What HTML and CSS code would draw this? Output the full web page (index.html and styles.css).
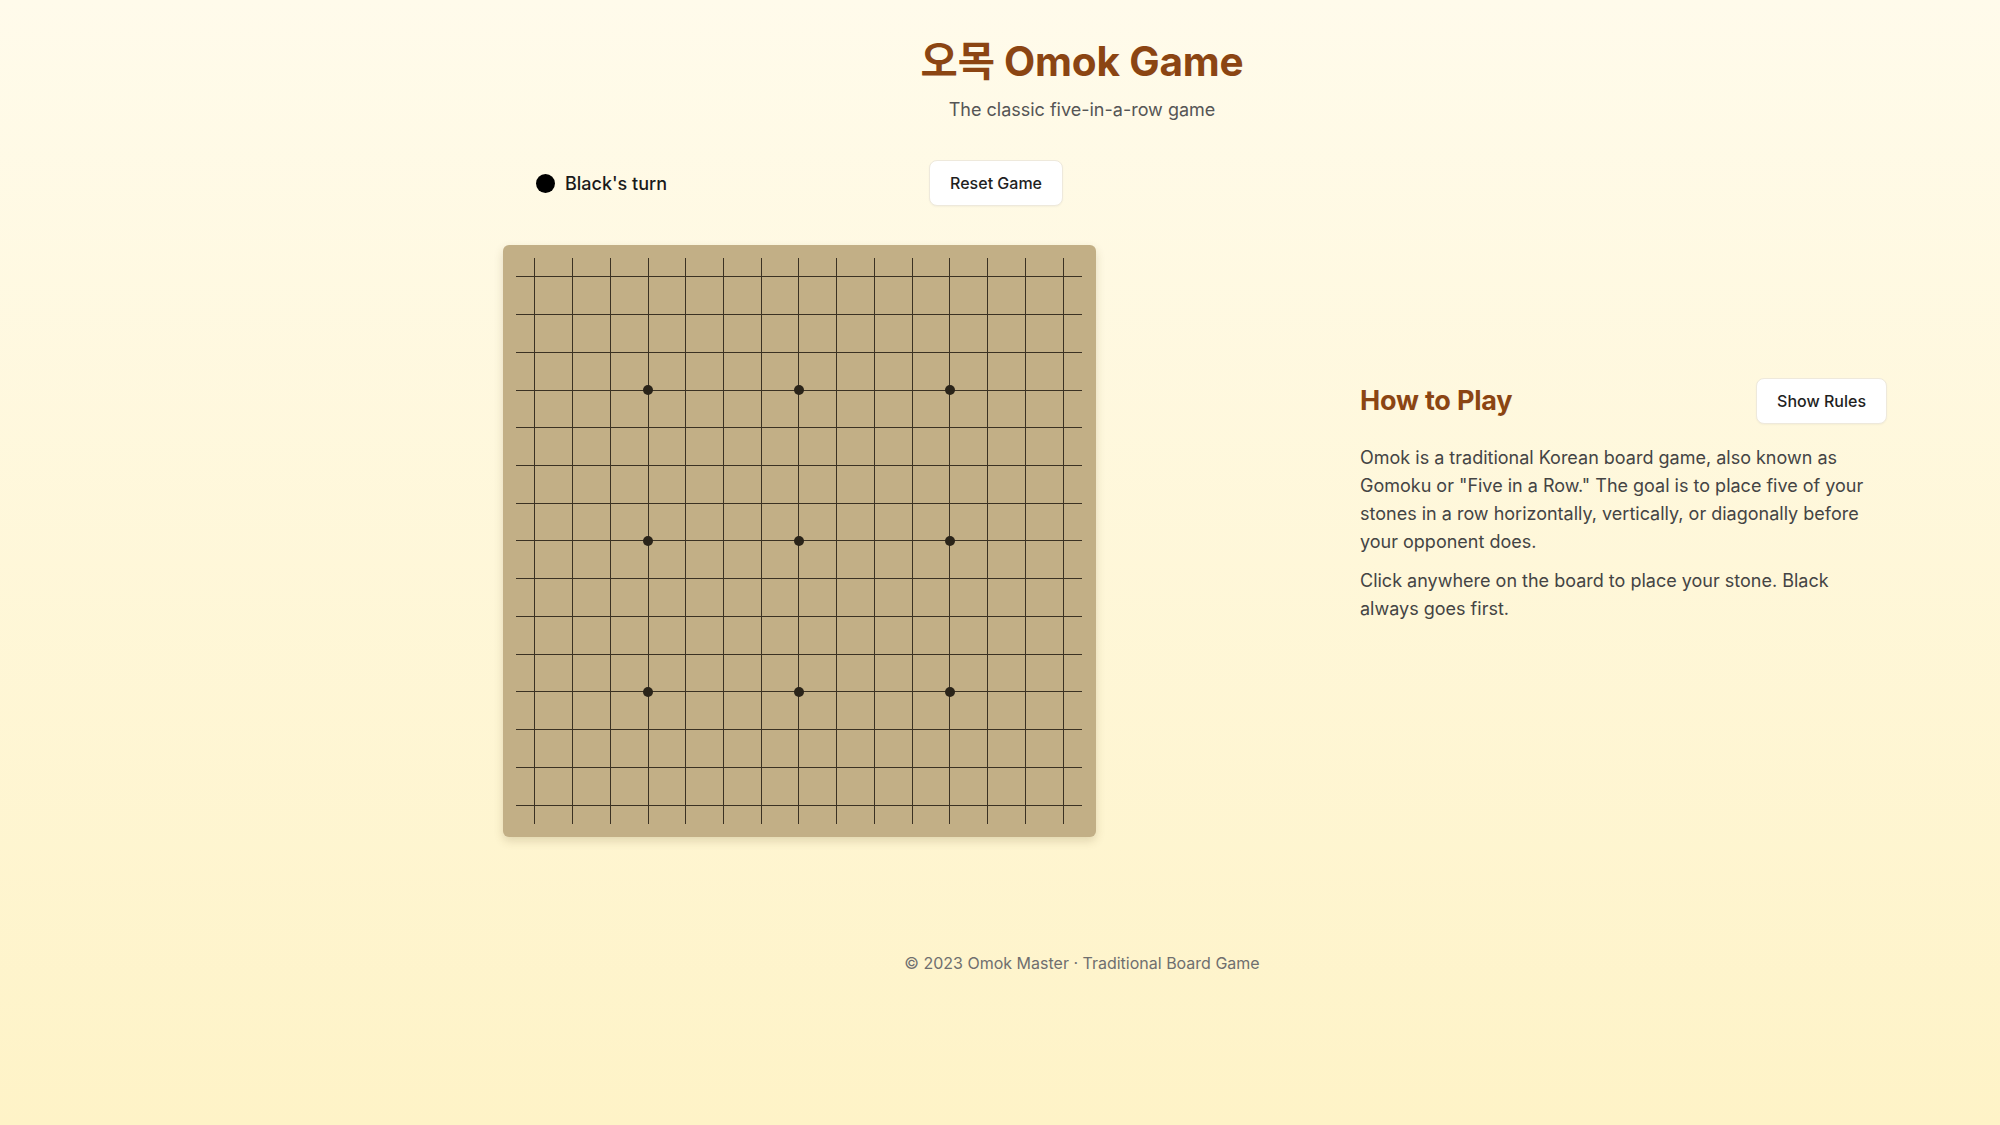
FILE: index.html
```html
<!DOCTYPE html>
<html lang="en">
<head>
<meta charset="utf-8">
<title>오목 Omok Game</title>
<link rel="stylesheet" href="styles.css">
</head>
<body>
<div class="page">
  <header class="header">
    <h1 class="title">오목 Omok Game</h1>
    <p class="subtitle">The classic five-in-a-row game</p>
  </header>
  <main class="main">
    <section class="game">
      <div class="status">
        <div class="turn"><span class="stone"></span><span class="turn-text">Black's turn</span></div>
        <button class="btn">Reset Game</button>
      </div>
      <div class="board">
        <div class="grid">
<div class="cell"></div><div class="cell"></div><div class="cell"></div><div class="cell"></div><div class="cell"></div><div class="cell"></div><div class="cell"></div><div class="cell"></div><div class="cell"></div><div class="cell"></div><div class="cell"></div><div class="cell"></div><div class="cell"></div><div class="cell"></div><div class="cell"></div>
<div class="cell"></div><div class="cell"></div><div class="cell"></div><div class="cell"></div><div class="cell"></div><div class="cell"></div><div class="cell"></div><div class="cell"></div><div class="cell"></div><div class="cell"></div><div class="cell"></div><div class="cell"></div><div class="cell"></div><div class="cell"></div><div class="cell"></div>
<div class="cell"></div><div class="cell"></div><div class="cell"></div><div class="cell"></div><div class="cell"></div><div class="cell"></div><div class="cell"></div><div class="cell"></div><div class="cell"></div><div class="cell"></div><div class="cell"></div><div class="cell"></div><div class="cell"></div><div class="cell"></div><div class="cell"></div>
<div class="cell"></div><div class="cell"></div><div class="cell"></div><div class="cell"><span class="dot"></span></div><div class="cell"></div><div class="cell"></div><div class="cell"></div><div class="cell"><span class="dot"></span></div><div class="cell"></div><div class="cell"></div><div class="cell"></div><div class="cell"><span class="dot"></span></div><div class="cell"></div><div class="cell"></div><div class="cell"></div>
<div class="cell"></div><div class="cell"></div><div class="cell"></div><div class="cell"></div><div class="cell"></div><div class="cell"></div><div class="cell"></div><div class="cell"></div><div class="cell"></div><div class="cell"></div><div class="cell"></div><div class="cell"></div><div class="cell"></div><div class="cell"></div><div class="cell"></div>
<div class="cell"></div><div class="cell"></div><div class="cell"></div><div class="cell"></div><div class="cell"></div><div class="cell"></div><div class="cell"></div><div class="cell"></div><div class="cell"></div><div class="cell"></div><div class="cell"></div><div class="cell"></div><div class="cell"></div><div class="cell"></div><div class="cell"></div>
<div class="cell"></div><div class="cell"></div><div class="cell"></div><div class="cell"></div><div class="cell"></div><div class="cell"></div><div class="cell"></div><div class="cell"></div><div class="cell"></div><div class="cell"></div><div class="cell"></div><div class="cell"></div><div class="cell"></div><div class="cell"></div><div class="cell"></div>
<div class="cell"></div><div class="cell"></div><div class="cell"></div><div class="cell"><span class="dot"></span></div><div class="cell"></div><div class="cell"></div><div class="cell"></div><div class="cell"><span class="dot"></span></div><div class="cell"></div><div class="cell"></div><div class="cell"></div><div class="cell"><span class="dot"></span></div><div class="cell"></div><div class="cell"></div><div class="cell"></div>
<div class="cell"></div><div class="cell"></div><div class="cell"></div><div class="cell"></div><div class="cell"></div><div class="cell"></div><div class="cell"></div><div class="cell"></div><div class="cell"></div><div class="cell"></div><div class="cell"></div><div class="cell"></div><div class="cell"></div><div class="cell"></div><div class="cell"></div>
<div class="cell"></div><div class="cell"></div><div class="cell"></div><div class="cell"></div><div class="cell"></div><div class="cell"></div><div class="cell"></div><div class="cell"></div><div class="cell"></div><div class="cell"></div><div class="cell"></div><div class="cell"></div><div class="cell"></div><div class="cell"></div><div class="cell"></div>
<div class="cell"></div><div class="cell"></div><div class="cell"></div><div class="cell"></div><div class="cell"></div><div class="cell"></div><div class="cell"></div><div class="cell"></div><div class="cell"></div><div class="cell"></div><div class="cell"></div><div class="cell"></div><div class="cell"></div><div class="cell"></div><div class="cell"></div>
<div class="cell"></div><div class="cell"></div><div class="cell"></div><div class="cell"><span class="dot"></span></div><div class="cell"></div><div class="cell"></div><div class="cell"></div><div class="cell"><span class="dot"></span></div><div class="cell"></div><div class="cell"></div><div class="cell"></div><div class="cell"><span class="dot"></span></div><div class="cell"></div><div class="cell"></div><div class="cell"></div>
<div class="cell"></div><div class="cell"></div><div class="cell"></div><div class="cell"></div><div class="cell"></div><div class="cell"></div><div class="cell"></div><div class="cell"></div><div class="cell"></div><div class="cell"></div><div class="cell"></div><div class="cell"></div><div class="cell"></div><div class="cell"></div><div class="cell"></div>
<div class="cell"></div><div class="cell"></div><div class="cell"></div><div class="cell"></div><div class="cell"></div><div class="cell"></div><div class="cell"></div><div class="cell"></div><div class="cell"></div><div class="cell"></div><div class="cell"></div><div class="cell"></div><div class="cell"></div><div class="cell"></div><div class="cell"></div>
<div class="cell"></div><div class="cell"></div><div class="cell"></div><div class="cell"></div><div class="cell"></div><div class="cell"></div><div class="cell"></div><div class="cell"></div><div class="cell"></div><div class="cell"></div><div class="cell"></div><div class="cell"></div><div class="cell"></div><div class="cell"></div><div class="cell"></div>
        </div>
      </div>
    </section>
    <aside class="rules">
      <div class="rules-head">
        <h2 class="rules-title">How to Play</h2>
        <button class="btn">Show Rules</button>
      </div>
      <p class="rules-text">Omok is a traditional Korean board game, also known as Gomoku or "Five in a Row." The goal is to place five of your stones in a row horizontally, vertically, or diagonally before your opponent does.</p>
      <p class="rules-text">Click anywhere on the board to place your stone. Black always goes first.</p>
    </aside>
  </main>
  <footer class="footer">© 2023 Omok Master · Traditional Board Game</footer>
</div>
</body>
</html>
```

FILE: styles.css
```css
html, body {
  margin: 0;
  padding: 0;
}

body {
  min-height: 100vh;
  background: linear-gradient(180deg, #fffbeb 0%, #fef3c7 100%);
  font-family: Inter, "Noto Sans CJK KR", "Noto Sans", sans-serif;
  color: #1f1f1f;
}

.page {
  display: flex;
  flex-direction: column;
}

.header {
  padding: 38px 0 0 164px;
  text-align: center;
}

.title {
  margin: 0;
  font-size: 40.5px;
  line-height: 48px;
  font-weight: 700;
  color: #8b4513;
  letter-spacing: -0.2px;
}

.subtitle {
  margin: 12px 0 0;
  font-size: 18px;
  line-height: 24px;
  color: #555555;
}

.main {
  display: flex;
  align-items: center;
  gap: 265px;
  padding-left: 503px;
  margin-top: 38px;
}

.game {
  width: 592px;
  flex: none;
}

.status {
  display: flex;
  justify-content: space-between;
  align-items: center;
  padding: 0 32px 0 33px;
  height: 46px;
  margin-bottom: 39px;
}

.turn {
  display: flex;
  align-items: center;
  gap: 10px;
  font-size: 18px;
  font-weight: 500;
  color: #1a1a1a;
}

.stone {
  width: 19px;
  height: 19px;
  border-radius: 50%;
  background: #000;
}

.btn {
  box-sizing: border-box;
  height: 46px;
  padding: 0 20px;
  border: 1px solid #eee9dc;
  border-radius: 8px;
  background: #ffffff;
  font-family: Inter, sans-serif;
  font-size: 16px;
  font-weight: 500;
  color: #1f1f1f;
  box-shadow: 0 1px 2px rgba(0, 0, 0, 0.04);
}

.board {
  box-sizing: border-box;
  width: 593px;
  height: 592px;
  padding: 13px 14px 13px 13px;
  background: #c2af86;
  border-radius: 6px;
  box-shadow: 0 4px 10px rgba(90, 70, 30, 0.18);
}

.grid {
  display: grid;
  grid-template-columns: repeat(15, 1fr);
  grid-template-rows: repeat(15, 1fr);
  width: 566px;
  height: 566px;
}

.cell {
  position: relative;
}

.cell::before {
  content: "";
  position: absolute;
  left: 0;
  right: 0;
  top: 50%;
  height: 1px;
  margin-top: -0.5px;
  background: #3b3223;
}

.cell::after {
  content: "";
  position: absolute;
  top: 0;
  bottom: 0;
  left: 50%;
  width: 1px;
  margin-left: -0.5px;
  background: #3b3223;
}

.dot {
  position: absolute;
  left: 50%;
  top: 50%;
  width: 10px;
  height: 10px;
  margin: -5px 0 0 -5px;
  border-radius: 50%;
  background: #2a2419;
  z-index: 1;
}

.rules {
  width: 527px;
  flex: none;
  padding-top: 3px;
}

.rules-head {
  display: flex;
  justify-content: space-between;
  align-items: center;
  margin-bottom: 20px;
}

.rules-title {
  margin: 0;
  font-size: 27px;
  line-height: 34px;
  font-weight: 700;
  color: #8b4513;
  letter-spacing: -0.2px;
}

.rules-text {
  max-width: 512px;
  margin: 0 0 11px;
  font-size: 18px;
  line-height: 28px;
  color: #444444;
}

.rules-text:last-child {
  margin-bottom: 0;
}

.footer {
  margin-top: 114px;
  padding-left: 164px;
  text-align: center;
  font-size: 16px;
  line-height: 24px;
  color: #6f6f6f;
}
```
